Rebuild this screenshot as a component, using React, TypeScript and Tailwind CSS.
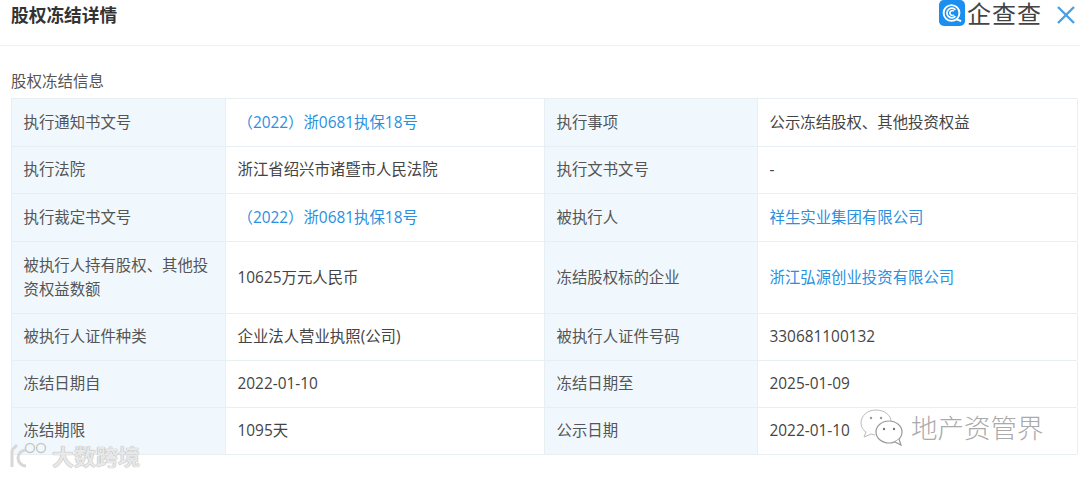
const rows: { a: string; b: string; bLink?: boolean; c: string; d: string; dLink?: boolean; h: string }[] = [
  { a: "执行通知书文号", b: "（2022）浙0681执保18号", bLink: true, c: "执行事项", d: "公示冻结股权、其他投资权益", h: "h-[48px]" },
  { a: "执行法院", b: "浙江省绍兴市诸暨市人民法院", c: "执行文书文号", d: "-", h: "h-[47px]" },
  { a: "执行裁定书文号", b: "（2022）浙0681执保18号", bLink: true, c: "被执行人", d: "祥生实业集团有限公司", dLink: true, h: "h-[48px]" },
  { a: "被执行人持有股权、其他投资权益数额", b: "10625万元人民币", c: "冻结股权标的企业", d: "浙江弘源创业投资有限公司", dLink: true, h: "h-[72px]" },
  { a: "被执行人证件种类", b: "企业法人营业执照(公司)", c: "被执行人证件号码", d: "330681100132", h: "h-[47px]" },
  { a: "冻结日期自", b: "2022-01-10", c: "冻结日期至", d: "2025-01-09", h: "h-[47px]" },
  { a: "冻结期限", b: "1095天", c: "公示日期", d: "2022-01-10", h: "h-[47px]" },
];

function Label({ children }: { children: string }) {
  return (
    <div className="flex items-center bg-[#f0f8fd] border-r border-[#e8eff3] pl-[11.5px] pr-[10px] text-[15.4px] leading-[24px] text-[#555]">
      <span>{children}</span>
    </div>
  );
}

function Value({ children, link }: { children: string; link?: boolean }) {
  return (
    <div className={`flex items-center border-r border-[#e8eff3] pl-[11.5px] pr-3 text-[15.4px] leading-[24px] ${link ? "text-[#2a90e0]" : "text-[#444]"}`}>
      <span>{children}</span>
    </div>
  );
}

function Logo() {
  return (
    <svg width="26" height="26" viewBox="0 0 27 27" className="shrink-0">
      <rect width="27" height="27" rx="5" fill="#1a8ff0" />
      <circle cx="13" cy="13.5" r="8.2" fill="none" stroke="#fff" strokeWidth="2" />
      <path d="M17 10.2 A5 5 0 1 0 17 16.8" fill="none" stroke="#fff" strokeWidth="1.8" />
      <path d="M15.4 11.8 A2.4 2.4 0 1 0 15.4 15.2" fill="none" stroke="#fff" strokeWidth="1.5" />
      <path d="M18 20 L23 22" stroke="#fff" strokeWidth="2" />
    </svg>
  );
}

function Bubbles() {
  return (
    <svg width="44" height="40" viewBox="0 0 44 40" className="shrink-0">
      <path d="M16 2 C7 2 1 8 1 15 C1 19 3 22 6 24 L4 29 L11 26 C12 26 14 27 15 27" fill="#fff" stroke="#bbb" strokeWidth="1" />
      <path d="M16 2 C25 2 31 8 31 13" fill="#fff" stroke="#bbb" strokeWidth="1" />
      <ellipse cx="29" cy="24" rx="13" ry="11" fill="#fff" stroke="#999" strokeWidth="1.2" />
      <path d="M35 34 L41 37 L39 31" fill="#fff" stroke="#999" strokeWidth="1.2" />
      <circle cx="11" cy="10" r="1.2" fill="#999" />
      <circle cx="21" cy="10" r="1.2" fill="#999" />
      <circle cx="24" cy="21" r="1.2" fill="#777" />
      <circle cx="34" cy="21" r="1.2" fill="#777" />
    </svg>
  );
}

export default function App() {
  return (
    <div className="relative w-[1080px] h-[477px] overflow-hidden bg-white" style={{ fontFamily: '"Open Sans", "Noto Sans CJK SC", sans-serif' }}>
      <header className="h-[46px] border-b border-[#f0f1f2] flex items-start pl-[11px] pr-[4px]">
        <h1 className="text-[17.7px] leading-[30px] font-bold text-[#333]">股权冻结详情</h1>
        <div className="ml-auto flex items-start">
          <Logo />
          <span className="ml-[2px] mt-[3px] text-[24px] leading-none tracking-[1px] text-[#444] font-['Liberation_Sans','Noto_Sans_CJK_SC',sans-serif]">企查查</span>
          <svg width="20" height="20" viewBox="0 0 20 20" className="ml-[14px] mt-[5px]">
            <path d="M2 2 L18 18 M18 2 L2 18" stroke="#4a9fe6" strokeWidth="2.4" />
          </svg>
        </div>
      </header>
      <section className="pl-[11px] pr-[3px]">
        <h2 className="mt-[23px] h-[29px] text-[15.5px] leading-[24px] text-[#555]">股权冻结信息</h2>
        <div className="border-t border-l border-[#e8eff3]">
          {rows.map((r) => (
            <div key={r.a} className={`grid grid-cols-[214px_319px_213px_320px] border-b border-[#e8eff3] ${r.h}`}>
              <Label>{r.a}</Label>
              <Value link={r.bLink}>{r.b}</Value>
              <Label>{r.c}</Label>
              <Value link={r.dLink}>{r.d}</Value>
            </div>
          ))}
        </div>
      </section>
      <div className="absolute left-[9px] top-[442px] flex items-center">
        <svg width="40" height="28" viewBox="0 0 40 28" className="shrink-0">
          <path d="M3 8 L3 25 M8 3 L3 8" fill="none" stroke="#d8d8d8" strokeWidth="3" />
          <path d="M17 8 A8 8 0 1 0 17 24" fill="none" stroke="#d8d8d8" strokeWidth="3" />
          <circle cx="21" cy="6" r="4.5" fill="none" stroke="#c8c8c8" strokeWidth="1.5" />
          <circle cx="32" cy="6" r="4.5" fill="none" stroke="#c8c8c8" strokeWidth="1.5" />
        </svg>
        <span className="ml-[3px] text-[22px] leading-[28px] font-bold text-[#e8e8e8]" style={{ textShadow: "0 0 1px #888" }}>大数跨境</span>
      </div>
      <div className="absolute left-[860px] top-[408px] flex items-center">
        <Bubbles />
        <span className="ml-[7px] text-[26.5px] leading-[36px] font-light text-[#aaa]" style={{ textShadow: "0 0 1px #fff" }}>地产资管界</span>
      </div>
    </div>
  );
}
